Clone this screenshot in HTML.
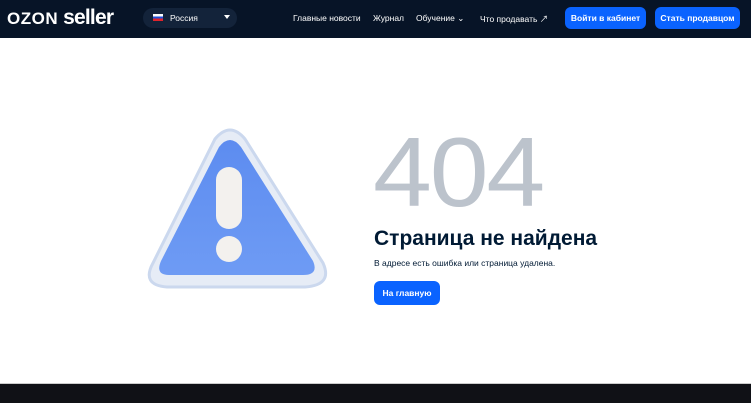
<!DOCTYPE html>
<html><head><meta charset="utf-8"><style>
*{margin:0;padding:0;box-sizing:border-box}
body{width:751px;height:403px;overflow:hidden;background:#fff;font-family:"Liberation Sans","Noto Sans CJK SC",sans-serif;position:relative}
.hdr{position:absolute;left:0;top:0;width:751px;height:38px;background:#071427}
.abs{position:absolute;white-space:nowrap}
.logo{left:7px;top:6px;color:#fff;font-size:21px;font-weight:bold;letter-spacing:-0.8px}
.reg{left:143px;top:8px;width:94px;height:20px;border-radius:10px;background:#13233a}
.nav{color:#fff;font-size:9px;top:13px}
.btn{background:#0a63ff;color:#fff;font-size:8.5px;font-weight:bold;border-radius:6px;text-align:center;line-height:22px;height:22px}
.foot{position:absolute;left:0;top:383px;width:751px;height:20px;background:#101116;border-top:1px solid #ccc}
</style></head><body>
<div class="hdr"></div>
<div class="abs logo"><span style="font-size:17px;letter-spacing:0.5px">OZON</span> seller</div>
<div class="abs reg"></div>
<div class="abs" style="left:153px;top:14px;width:10px;height:7px;background:linear-gradient(#fff 33%,#1d4fd8 33%,#1d4fd8 66%,#e0242c 66%)"></div>
<div class="abs nav" style="left:170px;top:13px;font-size:8.5px">Россия</div>
<div class="abs" style="left:224px;top:15px;width:0;height:0;border-left:3px solid transparent;border-right:3px solid transparent;border-top:4px solid #fff"></div>
<div class="abs nav" style="left:293px;font-size:8.5px">Главные новости</div>
<div class="abs nav" style="left:373px;font-size:8.5px">Журнал</div>
<div class="abs nav" style="left:416px;font-size:8.5px">Обучение ⌄</div>
<div class="abs nav" style="left:480px;font-size:8.5px">Что продавать ↗</div>
<div class="abs btn" style="left:565px;top:7px;width:81px">Войти в кабинет</div>
<div class="abs btn" style="left:655px;top:7px;width:85px">Стать продавцом</div>

<svg class="abs" style="left:145px;top:125px" width="185" height="170" viewBox="0 0 185 170">
<defs><linearGradient id="g" x1="0" y1="0" x2="0" y2="1"><stop offset="0" stop-color="#5d8cf0"/><stop offset="1" stop-color="#6e9bf4"/></linearGradient></defs>
<path d="M70 14 Q85 -4 100 14 L178 138 Q188 160 160 162 L22 162 Q-4 160 8 138 Z" fill="#e6ecf6" stroke="#cbd8ee" stroke-width="3"/>
<path d="M74 22 Q85 8 96 22 L168 136 Q174 150 158 150 L24 150 Q10 150 16 136 Z" fill="url(#g)"/>
<rect x="71" y="42" width="26" height="62" rx="13" fill="#f3f1ee"/>
<circle cx="84" cy="124" r="13" fill="#f3f1ee"/>
</svg>

<div class="abs" style="left:373px;top:116px;font-size:98px;color:#bcc3cc;letter-spacing:-2px;transform:scaleX(1.08);transform-origin:left top">404</div>
<div class="abs" style="left:374px;top:227px;font-size:21px;font-weight:bold;color:#001a34">Страница не найдена</div>
<div class="abs" style="left:374px;top:258px;font-size:8.5px;color:#001a34">В адресе есть ошибка или страница удалена.</div>
<div class="abs btn" style="left:374px;top:281px;width:66px;height:24px;line-height:24px">На главную</div>
<div class="foot"></div>
</body></html>
